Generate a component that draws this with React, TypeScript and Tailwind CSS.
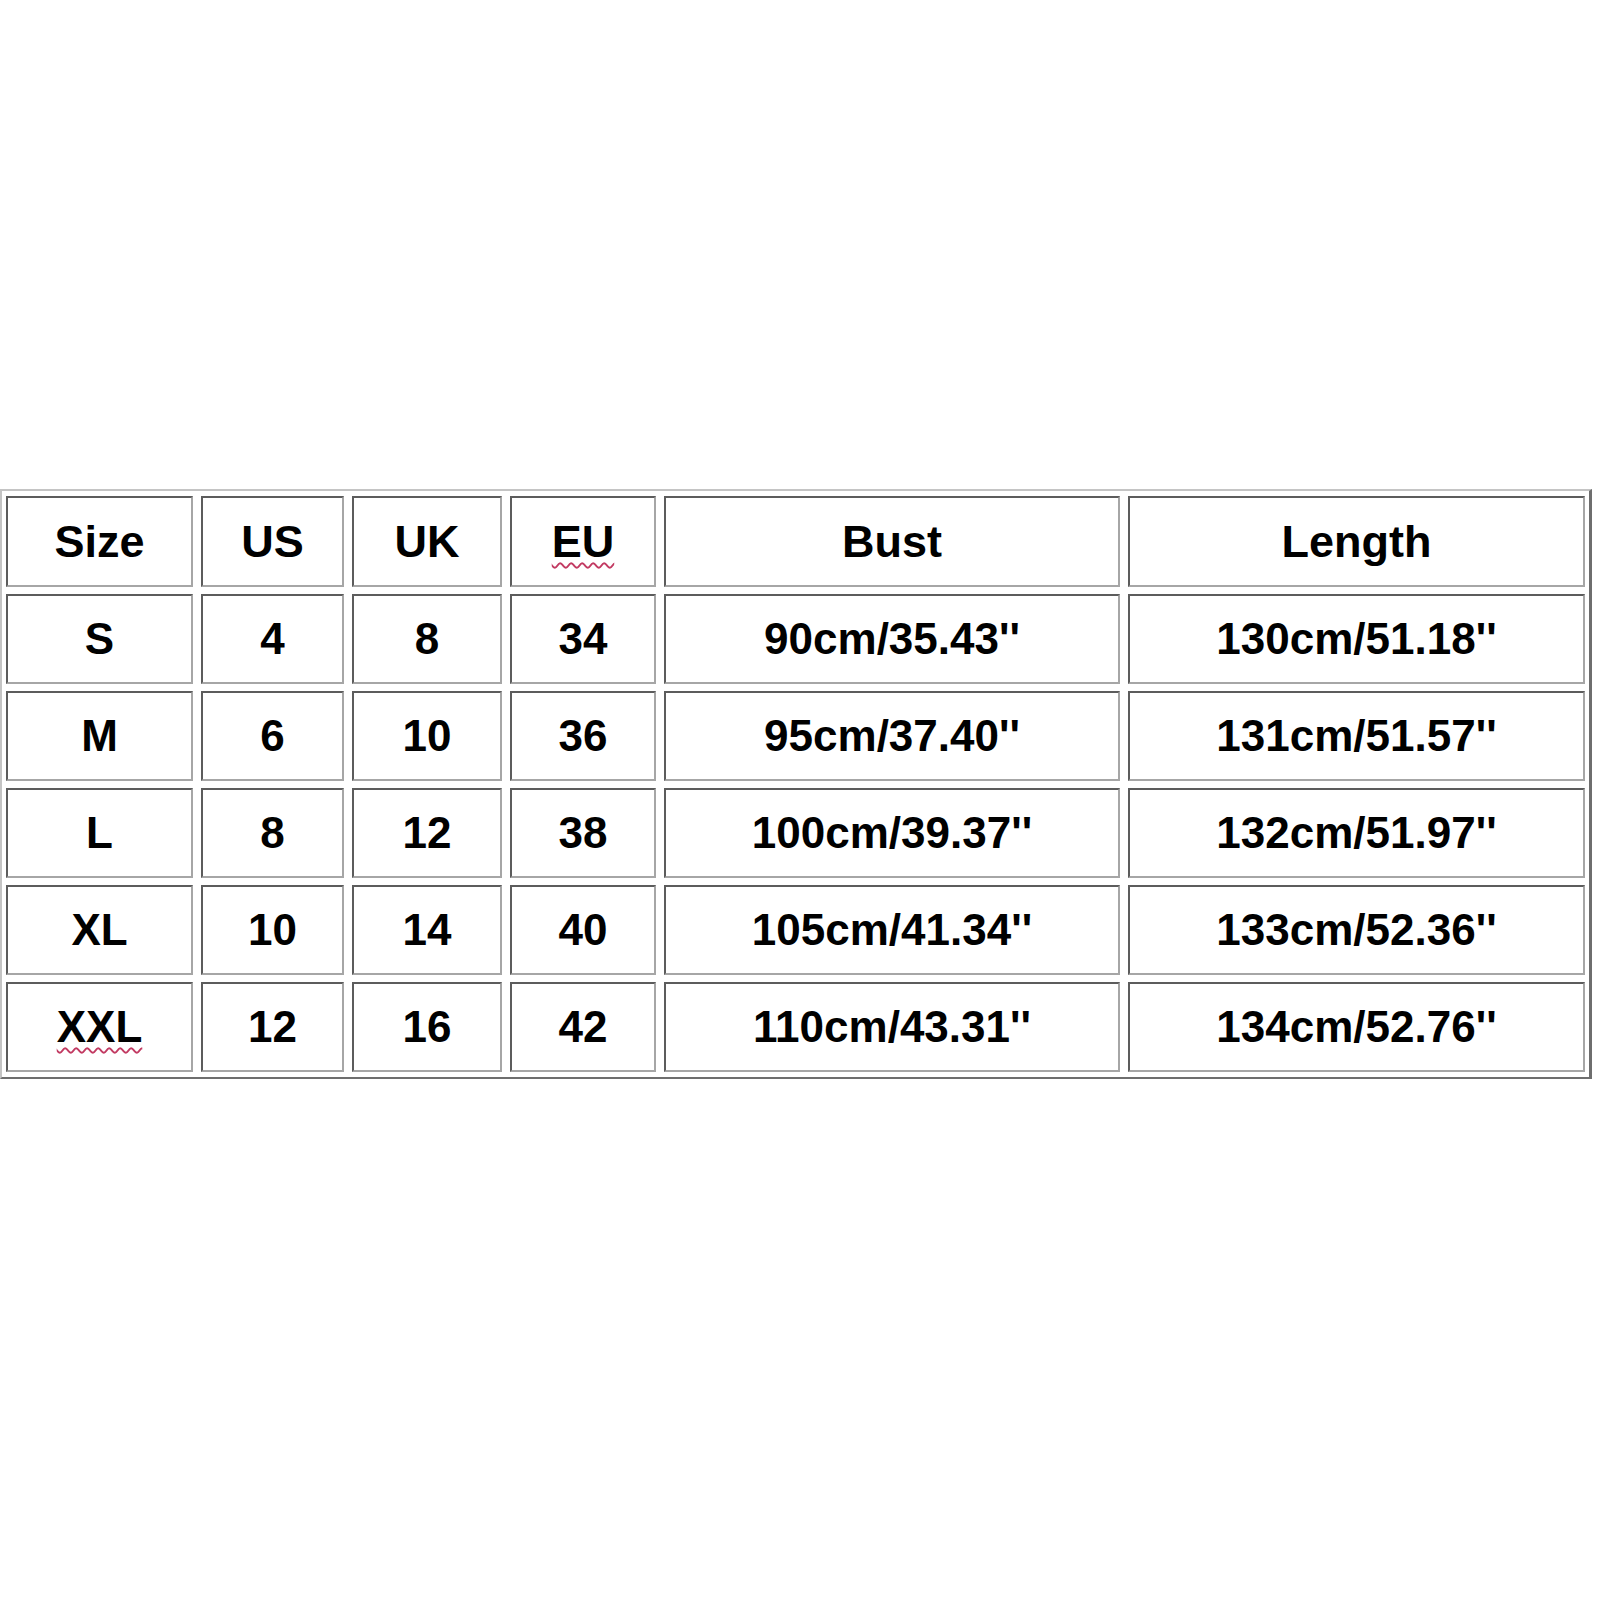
const headers = ['Size', 'US', 'UK', 'EU', 'Bust', 'Length'];

const rows = [
  ['S', '4', '8', '34', "90cm/35.43''", "130cm/51.18''"],
  ['M', '6', '10', '36', "95cm/37.40''", "131cm/51.57''"],
  ['L', '8', '12', '38', "100cm/39.37''", "132cm/51.97''"],
  ['XL', '10', '14', '40', "105cm/41.34''", "133cm/52.36''"],
  ['XXL', '12', '16', '42', "110cm/43.31''", "134cm/52.76''"],
];

// words the spell checker flagged in the original
const flagged = ['EU', 'XXL'];

function Cell({ text, head }: { text: string; head?: boolean }) {
  const wavy = flagged.includes(text);
  return (
    <div
      className={`flex items-center justify-center border-2 border-t-[#5c5c5c] border-l-[#5c5c5c] border-r-[#a6a6a6] border-b-[#a6a6a6] bg-white ${
        head ? 'h-[91px]' : 'h-[90px]'
      }`}
    >
      <span
        className={`font-bold leading-none text-black ${head ? 'text-[45px]' : 'text-[44px]'} ${
          wavy ? 'underline decoration-wavy decoration-[#c23a62] decoration-[2px] underline-offset-[5px]' : ''
        }`}
      >
        {text}
      </span>
    </div>
  );
}

export default function App() {
  return (
    <div
      className="w-[1600px] h-[1600px] bg-white pt-[489px]"
      style={{ fontFamily: '"Liberation Sans", Arial, sans-serif' }}
    >
      <div className="w-[1592px] border-2 border-r-[3px] border-t-[#c4c4c4] border-l-[#c4c4c4] border-r-[#6e6e6e] border-b-[#6e6e6e] pt-[5px] pl-[4px] pr-[4px] pb-[5px]">
        <div className="grid grid-cols-[187px_143px_150px_146px_456px_457px] gap-x-[8px] gap-y-[7px]">
          {headers.map((h) => (
            <Cell key={h} text={h} head />
          ))}
          {rows.map((r, i) => r.map((c, j) => <Cell key={`${i}-${j}`} text={c} />))}
        </div>
      </div>
    </div>
  );
}
